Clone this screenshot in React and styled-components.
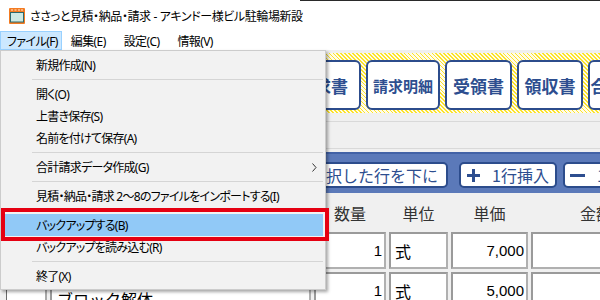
import React from "react";
import styled, { createGlobalStyle } from "styled-components";

const Global = createGlobalStyle`
  html, body { margin: 0; padding: 0; background: #fff; }
  body {
    width: 600px; height: 300px; overflow: hidden;
    font-family: "Noto Sans", "Noto Sans CJK JP", sans-serif;
  }
`;

const Window = styled.div`
  position: relative;
  width: 600px;
  height: 300px;
  overflow: hidden;
  background: #f0f0f0;
  display: flex;
  flex-direction: column;
`;

const TitleBar = styled.div`
  position: relative;
  flex: none;
  height: 31px;
  background: #fff;
  display: flex;
  align-items: center;
  gap: 5px;
  padding-left: 9px;
  font-size: 12px;
  letter-spacing: -0.4px;
  color: #000;
  font-feature-settings: "palt";
  &::before {
    content: "";
    position: absolute;
    top: 0;
    left: 300px;
    right: 0;
    height: 1px;
    background: #2a2a2a;
  }
`;

const MenuBar = styled.div`
  flex: none;
  height: 19px;
  background: #fff;
  display: flex;
  align-items: stretch;
  font-size: 12px;
  letter-spacing: -0.6px;
  font-feature-settings: "palt";
`;

const MenuBarItem = styled.div`
  display: flex;
  align-items: center;
  padding: ${(p) => (p.$open ? "0 3px 0 6px" : "0 8px")};
  box-sizing: border-box;
  color: #000;
  border: 1px solid ${(p) => (p.$open ? "#99d1ff" : "transparent")};
  background: ${(p) => (p.$open ? "#cce8ff" : "transparent")};
  white-space: nowrap;
`;

const Content = styled.div`
  flex: 1;
  display: flex;
  flex-direction: column;
  padding-top: 3px;
  font-family: "Noto Sans CJK JP", sans-serif;
`;

const Ribbon = styled.div`
  flex: none;
  height: 60px;
  box-sizing: border-box;
  display: flex;
  gap: 5px;
  padding: 7px 0 0 140px;
  background: repeating-linear-gradient(
    45deg,
    #fbe32c 0px,
    #fbe32c 1.2px,
    #fffbe8 1.2px,
    #fffbe8 2.8px
  );
`;

const RibbonButton = styled.div`
  flex: none;
  width: ${(p) => p.$w}px;
  height: 50px;
  box-sizing: border-box;
  background: #fff;
  border: 2px solid #2c4c8c;
  border-radius: 6px;
  display: flex;
  align-items: center;
  justify-content: center;
  color: #2d4e8f;
  font-size: ${(p) => (p.$compact ? 15 : 17)}px;
  font-weight: 700;
  white-space: nowrap;
  overflow: hidden;
`;

const Panel = styled.div`
  flex: none;
  height: 39px;
  box-sizing: border-box;
  padding-top: 8px;
`;

const PanelBox = styled.div`
  height: 28px;
  box-sizing: border-box;
  border-top: 1px solid #d9d9d9;
  border-bottom: 1px solid #d9d9d9;
`;

const BlueBar = styled.div`
  flex: none;
  height: 41px;
  box-sizing: border-box;
  background: #5b79b9;
  border-top: 2px solid #4262a6;
  display: flex;
  gap: 6px;
  padding: 8px 0 0 146px;
`;

const BarButton = styled.div`
  flex: none;
  width: ${(p) => p.$w}px;
  height: 26px;
  box-sizing: border-box;
  margin-left: ${(p) => (p.$sep ? 5 : 0)}px;
  background: #fff;
  border: 2px solid #2c4c8c;
  border-radius: 5px;
  display: flex;
  align-items: center;
  justify-content: center;
  gap: 12px;
  color: #2d4e8f;
  font-size: 16px;
  white-space: nowrap;
  overflow: hidden;
`;

const GridRow = styled.div`
  flex: none;
  display: grid;
  grid-template-columns: 41px 261px 72px 59px 77px 130px 1fr;
  column-gap: 3px;
  padding-left: 6px;
  height: ${(p) => p.$h}px;
  margin-bottom: ${(p) => p.$mb || 0}px;
  font-size: 16px;
`;

const HeadCell = styled.div`
  display: flex;
  align-items: center;
  justify-content: center;
  color: #333;
`;

const Cell = styled.div`
  box-sizing: border-box;
  background: #fff;
  border: 2px solid #b0b0b0;
  border-top-color: #9a9a9a;
  border-left-color: #9a9a9a;
  display: flex;
  align-items: ${(p) => (p.$top ? "flex-start" : "center")};
  justify-content: ${(p) => (p.$right ? "flex-end" : "flex-start")};
  padding: ${(p) => (p.$top ? "15px 0 0 5px" : p.$right ? "0 2px 0 0" : "0 0 0 4px")};
  color: #000;
  font-size: ${(p) => (p.$num ? 15 : 16)}px;
  font-family: ${(p) => (p.$num ? '"Liberation Sans", sans-serif' : '"Noto Sans CJK JP", sans-serif')};
  line-height: 20px;
  white-space: nowrap;
  overflow: hidden;
`;

const RowHead = styled.div`
  box-sizing: border-box;
  background: #fff;
  border-left: 1px solid #6a6a6a;
  border-right: 2px solid #a8a8a8;
`;

const DropMenu = styled.div`
  position: absolute;
  top: 50px;
  left: 0;
  width: 326px;
  box-sizing: border-box;
  background: #f2f2f2;
  border: 1px solid #cccccc;
  padding: 3px 2px 2px 2px;
  box-shadow: 2px 2px 3px rgba(0, 0, 0, 0.35);
  font-size: 12px;
  letter-spacing: -0.75px;
  font-feature-settings: "palt";
  color: #000;
`;

const MenuItem = styled.div`
  height: 22px;
  display: flex;
  align-items: center;
  justify-content: space-between;
  padding: 0 6px 0 33px;
  background: ${(p) => (p.$active ? "#91c9f7" : "transparent")};
  white-space: nowrap;
`;

const Separator = styled.div`
  height: 1px;
  margin: 3px 0 3px 29px;
  background: #d5d5d5;
`;

const Callout = styled.div`
  position: absolute;
  top: 208px;
  left: 1px;
  width: 328px;
  height: 33px;
  box-sizing: border-box;
  border: 4px solid #e50012;
  pointer-events: none;
`;

const AppIcon = () => (
  <svg width="16" height="16" viewBox="0 0 16 16">
    <rect x="0" y="0" width="16" height="16" rx="1" fill="#f37b22" />
    <rect x="2" y="1.5" width="2" height="1" fill="#ffe7cf" />
    <rect x="5.5" y="1.5" width="2" height="1" fill="#ffe7cf" />
    <rect x="9" y="1.5" width="2" height="1" fill="#ffe7cf" />
    <rect x="12" y="1.5" width="2" height="1" fill="#ffe7cf" />
    <rect x="1.5" y="4.5" width="13" height="9.5" fill="#cdeae4" stroke="#2c6a6e" />
  </svg>
);

const Chevron = () => (
  <svg width="5" height="9" viewBox="0 0 5 9">
    <polyline points="0.5,0.5 4,4.5 0.5,8.5" fill="none" stroke="#333" strokeWidth="1" />
  </svg>
);

const PlusIcon = () => (
  <svg width="13" height="13" viewBox="0 0 13 13">
    <rect x="0" y="5" width="13" height="3" fill="#2d4e8f" />
    <rect x="5" y="0" width="3" height="13" fill="#2d4e8f" />
  </svg>
);

const MinusIcon = () => (
  <svg width="15" height="13" viewBox="0 0 15 13">
    <rect x="0" y="5" width="15" height="3" fill="#2d4e8f" />
  </svg>
);

const ribbon = [
  { t: "見積書", w: 67 },
  { t: "納品書", w: 67 },
  { t: "請求書", w: 77 },
  { t: "請求明細", w: 74, c: true },
  { t: "受領書", w: 67 },
  { t: "領収書", w: 66 },
  { t: "合計請求書", w: 90 },
];

const rows = [
  { name: "", qty: "1", unit: "式", price: "7,000" },
  { name: "ブロック解体", qty: "1", unit: "式", price: "5,000" },
];

export default function App() {
  return (
    <>
      <Global />
      <Window>
        <TitleBar>
          <AppIcon />
          <span>ささっと見積・納品・請求 - アキンドー様ビル駐輪場新設</span>
        </TitleBar>
        <MenuBar>
          <MenuBarItem $open>ファイル(F)</MenuBarItem>
          <MenuBarItem>編集(E)</MenuBarItem>
          <MenuBarItem>設定(C)</MenuBarItem>
          <MenuBarItem>情報(V)</MenuBarItem>
        </MenuBar>
        <Content>
          <Ribbon>
            {ribbon.map((b) => (
              <RibbonButton key={b.t} $w={b.w} $compact={b.c}>
                {b.t}
              </RibbonButton>
            ))}
          </Ribbon>
          <Panel>
            <PanelBox />
          </Panel>
          <BlueBar>
            <BarButton $w={148}>選択した行を上に</BarButton>
            <BarButton $w={148}>選択した行を下に</BarButton>
            <BarButton $w={98} $sep>
              <PlusIcon />
              <span>1行挿入</span>
            </BarButton>
            <BarButton $w={98}>
              <MinusIcon />
              <span>1行削除</span>
            </BarButton>
          </BlueBar>
          <GridRow $h={39}>
            <HeadCell />
            <HeadCell />
            <HeadCell>数量</HeadCell>
            <HeadCell>単位</HeadCell>
            <HeadCell>単価</HeadCell>
            <HeadCell>金額</HeadCell>
            <HeadCell />
          </GridRow>
          {rows.map((r, i) => (
            <GridRow key={i} $h={37} $mb={3}>
              <RowHead />
              <Cell $top>{r.name}</Cell>
              <Cell $right $num>{r.qty}</Cell>
              <Cell>{r.unit}</Cell>
              <Cell $right $num>{r.price}</Cell>
              <Cell />
              <Cell />
            </GridRow>
          ))}
        </Content>
        <DropMenu>
          <MenuItem>新規作成(N)</MenuItem>
          <Separator />
          <MenuItem>開く(O)</MenuItem>
          <MenuItem>上書き保存(S)</MenuItem>
          <MenuItem>名前を付けて保存(A)</MenuItem>
          <Separator />
          <MenuItem>
            <span>合計請求データ作成(G)</span>
            <Chevron />
          </MenuItem>
          <Separator />
          <MenuItem>見積・納品・請求 2〜8のファイルをインポートする(I)</MenuItem>
          <Separator />
          <MenuItem $active>バックアップする(B)</MenuItem>
          <MenuItem>バックアップを読み込む(R)</MenuItem>
          <Separator />
          <MenuItem>終了(X)</MenuItem>
        </DropMenu>
        <Callout />
      </Window>
    </>
  );
}
